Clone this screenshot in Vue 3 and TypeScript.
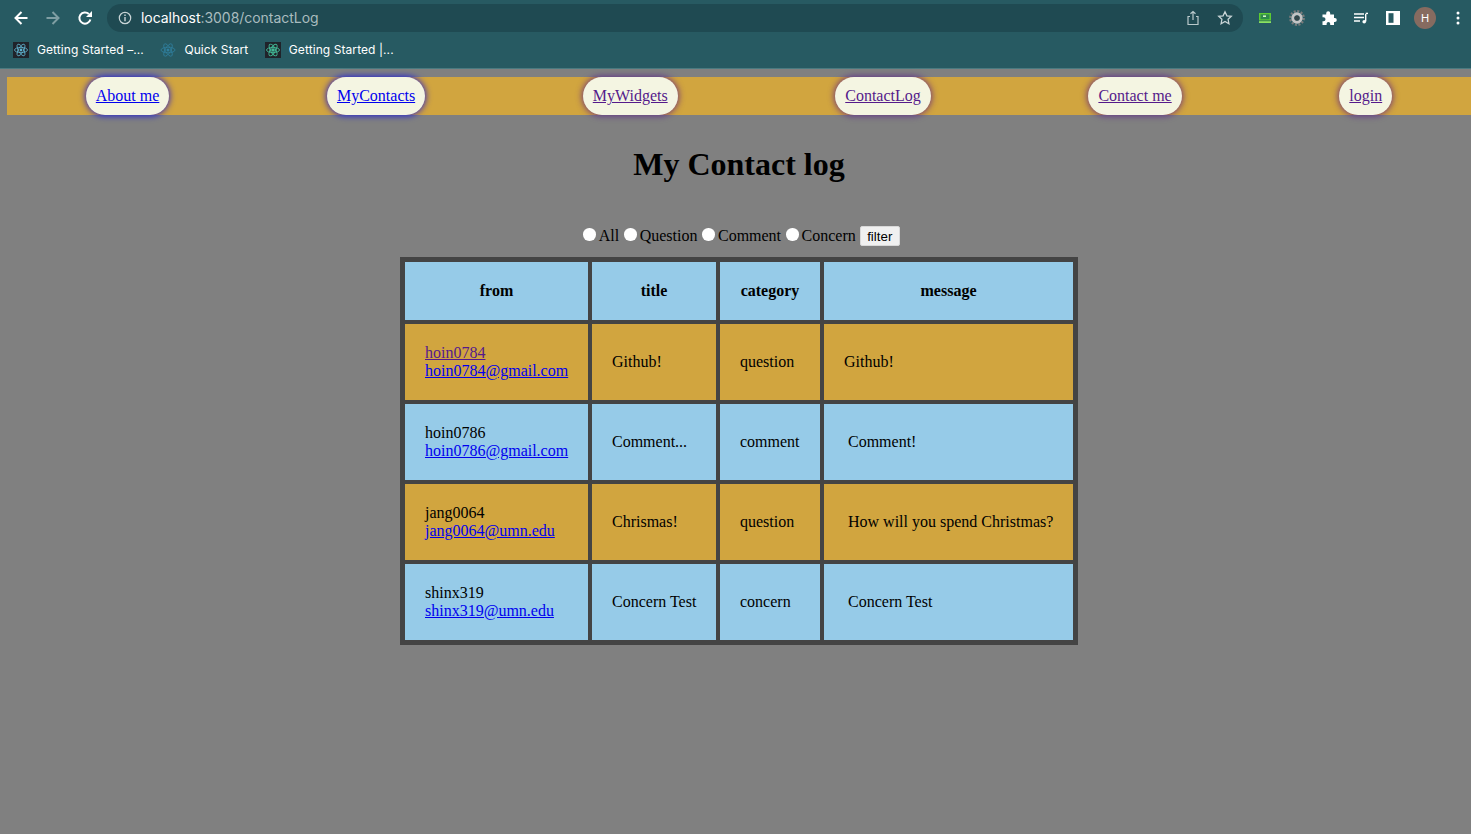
<script setup lang="ts">
interface LogRow {
  name: string;
  nameLink?: boolean;
  email: string;
  title: string;
  category: string;
  message: string;
  tight?: boolean;
}

const links = [
  { label: "About me", href: "#about", fresh: true },
  { label: "MyContacts", href: "#contacts", fresh: true },
  { label: "MyWidgets", href: "#widgets", fresh: false },
  { label: "ContactLog", href: "#log", fresh: false },
  { label: "Contact me", href: "#contact", fresh: false },
  { label: "login", href: "#login", fresh: false },
];

const filters = ["All", "Question", "Comment", "Concern"];

const rows: LogRow[] = [
  { name: "hoin0784", nameLink: true, email: "hoin0784@gmail.com", title: "Github!", category: "question", message: "Github!", tight: true },
  { name: "hoin0786", email: "hoin0786@gmail.com", title: "Comment...", category: "comment", message: "Comment!" },
  { name: "jang0064", email: "jang0064@umn.edu", title: "Chrismas!", category: "question", message: "How will you spend Christmas?" },
  { name: "shinx319", email: "shinx319@umn.edu", title: "Concern Test", category: "concern", message: "Concern Test" },
];
</script>

<template>
  <div class="browser">
    <header class="chrome">
      <div class="toolbar">
        <svg class="nav-icon" viewBox="0 0 16 16"><path d="M14.5 8H3M8.5 2 2.5 8l6 6" fill="none" stroke="#fff" stroke-width="2" /></svg>
        <svg class="nav-icon" viewBox="0 0 16 16"><path d="M1.5 8H13M7.5 2l6 6-6 6" fill="none" stroke="#7f9ea3" stroke-width="2" /></svg>
        <svg class="nav-icon" viewBox="0 0 16 16"><path d="M13.4 9.5A5.6 5.6 0 1 1 11.9 4" fill="none" stroke="#fff" stroke-width="2" /><path d="M9 7h6V1z" fill="#fff" /></svg>
        <div class="omnibox">
          <svg class="info" viewBox="0 0 14 14"><circle cx="7" cy="7" r="5.7" fill="none" stroke="#c9d5d7" stroke-width="1.2" /><path d="M7 6v4.2M7 3.6v1.3" stroke="#c9d5d7" stroke-width="1.4" /></svg>
          <span class="url"><b>localhost</b>:3008/contactLog</span>
          <svg class="omni-action" viewBox="0 0 16 16"><path d="M5 6.5H3v8h10v-8h-2M8 10V1.5M5.5 3.8 8 1.5l2.5 2.3" fill="none" stroke="#b9c9cb" stroke-width="1.2" /></svg>
          <svg class="omni-action" viewBox="0 0 16 16"><path d="m8 1.8 1.9 4 4.4.5-3.2 3 .8 4.4L8 11.5l-3.9 2.2.8-4.4-3.2-3 4.4-.5z" fill="none" stroke="#c9d5d7" stroke-width="1.3" /></svg>
        </div>
        <div class="extensions">
          <svg class="ext" viewBox="0 0 16 16"><rect x="2" y="3" width="12" height="7.5" fill="#5ccb32" /><rect x="3.5" y="4.3" width="9" height="5" fill="#2f8a4c" /><rect x="6" y="5.4" width="3" height="1.6" fill="#d8f5c8" /><rect x="2" y="11.2" width="12" height="1.8" fill="#8ae25f" /></svg>
          <svg class="ext" viewBox="0 0 16 16"><circle cx="8" cy="8" r="6.8" fill="none" stroke="#7c7c7c" stroke-width="2.2" stroke-dasharray="2.1 1.46" /><circle cx="8" cy="8" r="4.2" fill="none" stroke="#c4c4c4" stroke-width="3" /><circle cx="8" cy="8" r="2.6" fill="#36484b" /></svg>
          <svg class="ext" viewBox="0 0 16 16"><path d="M1.5 4.5h3.7V3.2a2 2 0 0 1 4 0v1.3H13V8h.8a2 2 0 0 1 0 4H13v3H9.2v-1.2a1.8 1.8 0 0 0-3.6 0V15H1.5v-3.7h1a2 2 0 0 0 0-4h-1z" fill="#fff" /></svg>
          <svg class="ext" viewBox="0 0 16 16"><path d="M1 4h10M1 7.5h10M1 11h6" stroke="#fff" stroke-width="1.4" /><path d="M12.7 4v7.5" stroke="#fff" stroke-width="1.4" /><circle cx="11.2" cy="11.7" r="1.8" fill="#fff" /><path d="M12.7 3.4H15" stroke="#fff" stroke-width="1.4" /></svg>
          <svg class="ext" viewBox="0 0 16 16"><rect x="1" y="1" width="14" height="14" fill="#fff" /><rect x="3.5" y="3.2" width="5" height="9.6" fill="#275a62" /></svg>
          <span class="avatar">H</span>
          <svg class="menu" viewBox="0 0 4 16"><circle cx="2" cy="3" r="1.5" fill="#fff" /><circle cx="2" cy="8" r="1.5" fill="#fff" /><circle cx="2" cy="13" r="1.5" fill="#fff" /></svg>
        </div>
      </div>
      <div class="bookmarks">
        <span class="bookmark">
          <svg class="fav dark" viewBox="0 0 16 16"><g fill="none" stroke="#5fb4d0" stroke-width=".8"><ellipse cx="8" cy="8" rx="6.5" ry="2.6" /><ellipse cx="8" cy="8" rx="6.5" ry="2.6" transform="rotate(60 8 8)" /><ellipse cx="8" cy="8" rx="6.5" ry="2.6" transform="rotate(120 8 8)" /></g><circle cx="8" cy="8" r="1.4" fill="#5fb4d0" /></svg>
          <span class="bookmark-label">Getting Started –...</span>
        </span>
        <span class="bookmark">
          <svg class="fav" viewBox="0 0 16 16"><g fill="none" stroke="#2f7f9e" stroke-width=".8"><ellipse cx="8" cy="8" rx="7" ry="2.8" /><ellipse cx="8" cy="8" rx="7" ry="2.8" transform="rotate(60 8 8)" /><ellipse cx="8" cy="8" rx="7" ry="2.8" transform="rotate(120 8 8)" /></g><circle cx="8" cy="8" r="1.5" fill="#2f7f9e" /></svg>
          <span class="bookmark-label">Quick Start</span>
        </span>
        <span class="bookmark">
          <svg class="fav dark" viewBox="0 0 16 16"><g fill="none" stroke="#42b896" stroke-width=".9"><ellipse cx="8" cy="8" rx="6.5" ry="2.6" /><ellipse cx="8" cy="8" rx="6.5" ry="2.6" transform="rotate(60 8 8)" /><ellipse cx="8" cy="8" rx="6.5" ry="2.6" transform="rotate(120 8 8)" /></g><circle cx="8" cy="8" r="1.8" fill="#42b896" /></svg>
          <span class="bookmark-label">Getting Started |...</span>
        </span>
      </div>
    </header>

    <main class="page">
      <nav class="navbar">
        <a
          v-for="link in links"
          :key="link.label"
          :href="link.href"
          class="pill"
          :class="{ fresh: link.fresh }"
        >{{ link.label }}</a>
      </nav>

      <h1 class="heading">My Contact log</h1>

      <form class="filters" @submit.prevent>
        <template v-for="f in filters" :key="f">
          <span class="radio"></span>
          <span class="radio-label">{{ f }}</span>
        </template>
        <button class="filter-btn" type="button">filter</button>
      </form>

      <table class="log">
        <thead>
          <tr>
            <th class="col-from">from</th>
            <th class="col-title">title</th>
            <th class="col-cat">category</th>
            <th class="col-msg">message</th>
          </tr>
        </thead>
        <tbody>
          <tr v-for="r in rows" :key="r.email">
            <td>
              <a v-if="r.nameLink" href="#gh" class="visited">{{ r.name }}</a>
              <span v-else>{{ r.name }}</span>
              <br />
              <a href="#mail" class="mail">{{ r.email }}</a>
            </td>
            <td>{{ r.title }}</td>
            <td>{{ r.category }}</td>
            <td :class="r.tight ? 'msg-tight' : 'msg'">{{ r.message }}</td>
          </tr>
        </tbody>
      </table>
    </main>
  </div>
</template>

<style>
html,
body {
  margin: 0;
  background: #808080;
}
</style>

<style scoped>
.browser {
  width: 1471px;
  height: 834px;
  overflow: hidden;
  display: flex;
  flex-direction: column;
  font-family: "Liberation Serif", serif;
}

.chrome {
  height: 68px;
  flex: none;
  background: #275a62;
  border-bottom: 1px solid #4a7a80;
  font-family: Inter, "Liberation Sans", sans-serif;
  color: #fff;
}

.toolbar {
  height: 36px;
  display: flex;
  align-items: center;
  padding: 0 0 0 13px;
}

.nav-icon {
  width: 16px;
  height: 16px;
  margin-right: 16px;
  flex: none;
}

.omnibox {
  width: 1136px;
  height: 28px;
  margin-left: -2px;
  border-radius: 14px;
  background: #1f4a52;
  display: flex;
  align-items: center;
  padding: 0 10px 0 11px;
  box-sizing: border-box;
  flex: none;
}

.info {
  width: 14px;
  height: 14px;
  margin-right: 9px;
}

.url {
  flex: 1;
  padding-bottom: 2px;
  font-size: 14px;
  letter-spacing: -0.04px;
  color: #a9bcbf;
}
.url b {
  font-weight: 400;
  color: #fff;
}

.omni-action {
  width: 16px;
  height: 16px;
  margin-left: 16px;
}

.extensions {
  display: flex;
  align-items: center;
  margin-left: 14px;
}

.ext {
  width: 16px;
  height: 16px;
  margin-right: 16px;
  flex: none;
}

.avatar {
  width: 22px;
  height: 22px;
  margin-left: -3px;
  border-radius: 50%;
  background: #866b60;
  font-size: 11px;
  line-height: 22px;
  text-align: center;
  flex: none;
}

.menu {
  width: 4px;
  height: 16px;
  margin-left: 20px;
}

.bookmarks {
  display: flex;
  align-items: center;
  height: 28px;
  padding: 0 0 0 13px;
  font-size: 12px;
}

.bookmark {
  display: flex;
  align-items: center;
  gap: 8px;
  margin-right: 16.5px;
}

.bookmark-label {
  padding-bottom: 2px;
  letter-spacing: 0.08px;
}

.fav {
  width: 16px;
  height: 16px;
  flex: none;
}
.fav.dark {
  background: #20232a;
}

.page {
  flex: 1;
  padding: 8px 0 0 7px;
  display: flex;
  flex-direction: column;
}

.navbar {
  height: 38px;
  background: #d1a53f;
  display: flex;
  justify-content: space-around;
  align-items: center;
}

.pill {
  height: 38px;
  line-height: 38px;
  padding: 0 10px;
  border-radius: 19px;
  background: #f4f5e2;
  font-size: 16px;
  color: #551a8b;
  box-shadow: 0 0 6px 1px rgba(85, 26, 139, 0.75);
}
.pill.fresh {
  color: #0000ee;
  box-shadow: 0 0 6px 1px rgba(0, 0, 238, 0.75);
}

.heading {
  margin: 31px 0 0;
  font-size: 32px;
  line-height: 37px;
  text-align: center;
  color: #000;
}

.filters {
  margin: 43px 0 0;
  height: 20px;
  display: flex;
  justify-content: center;
  align-items: center;
  font-size: 16px;
  color: #000;
}

.radio {
  width: 12.5px;
  height: 12.5px;
  margin: -3px 3px 0 5px;
  border-radius: 50%;
  background: #fff;
}

.filter-btn {
  width: 40px;
  height: 20px;
  margin-left: 4px;
  padding: 0;
  border: 1px solid #d8d8d8;
  border-radius: 2px;
  background: #f0f0f0;
  font-family: "Liberation Sans", sans-serif;
  font-size: 13.33px;
  color: #000;
}

.log {
  margin: 11px auto 0;
  width: 678px;
  background: #444;
  border: 1px solid #444;
  border-spacing: 4px;
  font-size: 16px;
  color: #000;
  table-layout: fixed;
}

th {
  height: 58px;
  padding: 0;
  background: #96cbe8;
  text-align: center;
}

.col-from {
  width: 183px;
}
.col-title {
  width: 124px;
}
.col-cat {
  width: 100px;
}
.col-msg {
  width: 249px;
}

td {
  height: 76px;
  padding: 0 16px 0 20px;
  box-sizing: border-box;
  line-height: 18px;
}

tbody tr:nth-child(odd) td {
  background: #d1a53f;
}
tbody tr:nth-child(even) td {
  background: #96cbe8;
}

td.msg {
  padding-left: 24px;
  padding-right: 0;
}

.visited {
  color: #551a8b;
}

.mail {
  color: #0000ee;
}
</style>
